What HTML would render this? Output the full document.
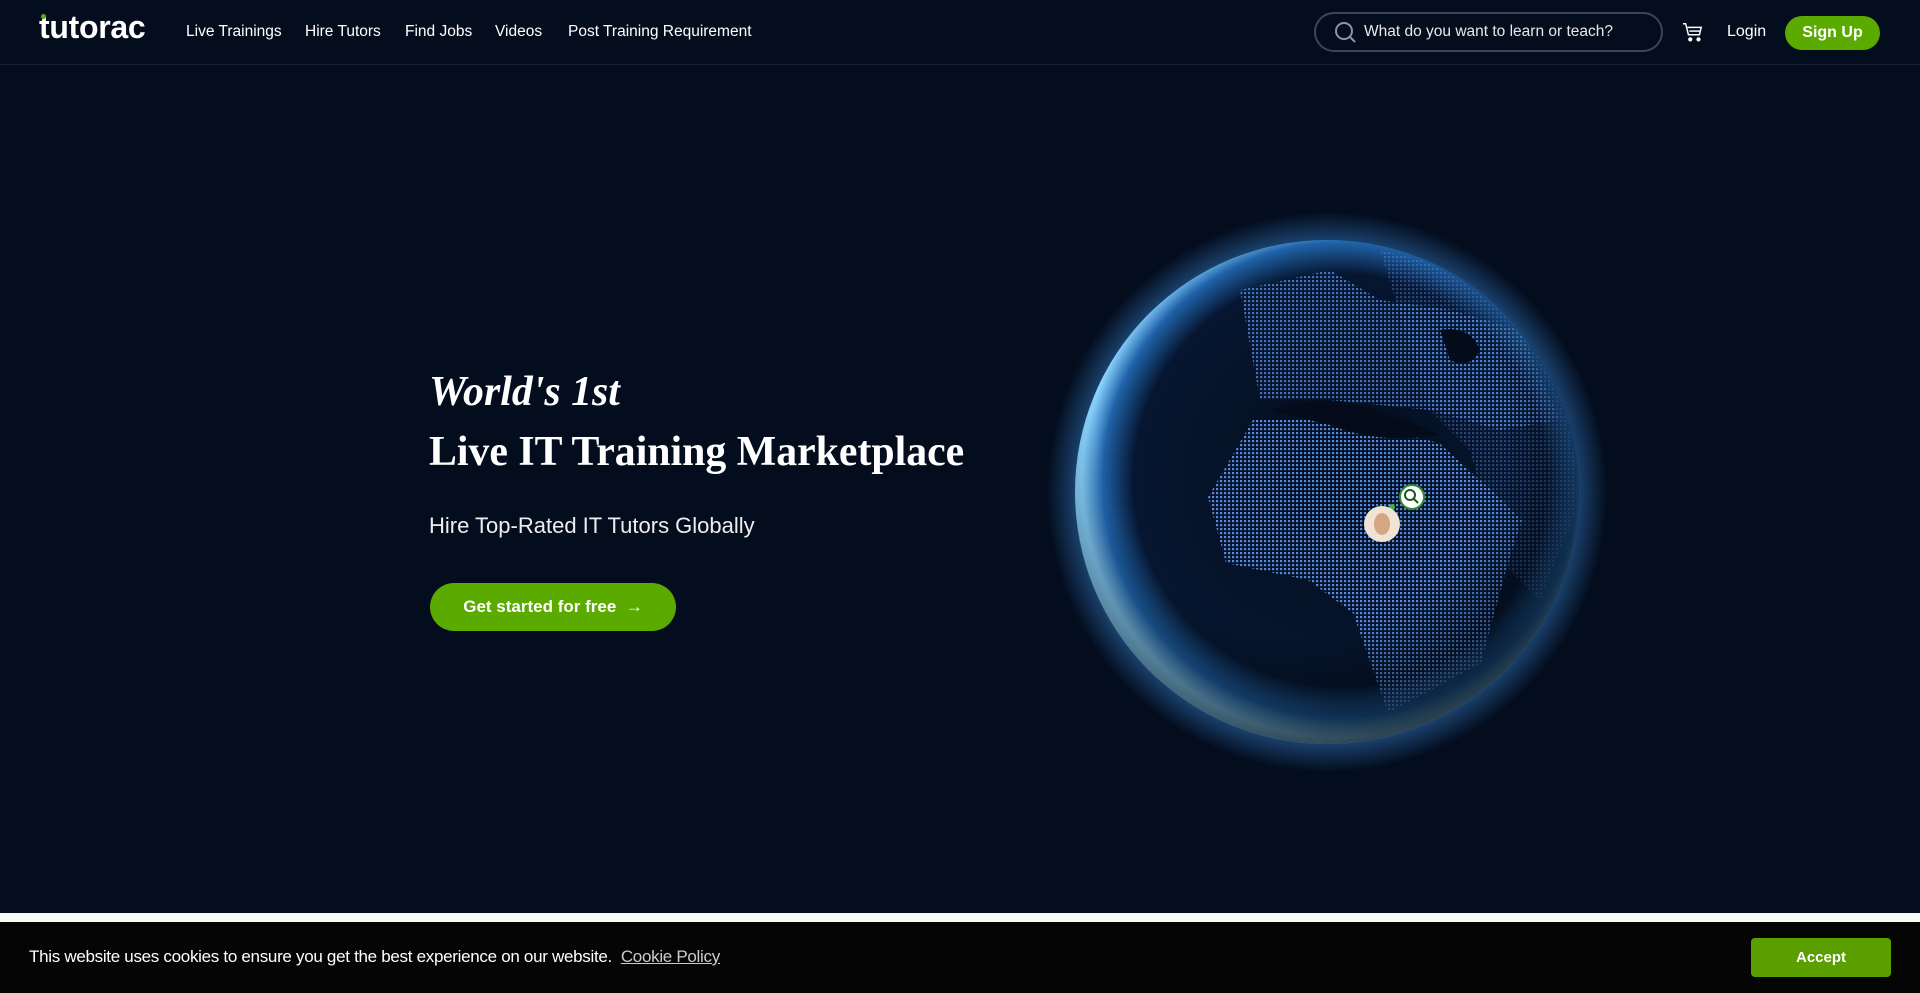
<!DOCTYPE html>
<html><head><meta charset="utf-8"><style>
*{margin:0;padding:0;box-sizing:border-box}
body{width:1920px;height:993px;background:#040d1e;overflow:hidden;font-family:"Liberation Sans",sans-serif;color:#fff;position:relative}
.hdr{position:absolute;left:0;top:0;width:1920px;height:65px;border-bottom:1px solid #1a2335}
.logo{position:absolute;left:39px;top:9px;font-size:32px;font-weight:bold;letter-spacing:-0.3px}
.logo i{position:absolute;left:2px;top:5px;width:5px;height:5px;border-radius:50%;background:#5aaa12}
.nav{position:absolute;top:23px;font-size:15.5px}
.search{position:absolute;left:1314px;top:12px;width:349px;height:40px;border:2px solid #3c4556;border-radius:20px}
.search span{position:absolute;left:48px;top:9px;font-size:15.5px;color:#e8e8e8}
.btn{background:#5aaa00;border-radius:20px;position:absolute;font-weight:bold;text-align:center}
h1{position:absolute;left:429px;font-family:"Liberation Serif",serif;font-weight:bold;font-size:41.8px;white-space:nowrap}
</style></head><body>
<div class="hdr">
<div class="logo"><i></i>tutorac</div>
<div class="nav" style="left:186px">Live Trainings</div>
<div class="nav" style="left:305px">Hire Tutors</div>
<div class="nav" style="left:405px">Find Jobs</div>
<div class="nav" style="left:495px">Videos</div>
<div class="nav" style="left:568px">Post Training Requirement</div>
<div class="search"><svg style="position:absolute;left:18px;top:7px" width="24" height="24" viewBox="0 0 24 24" fill="none" stroke="#8a93a3" stroke-width="2"><circle cx="10" cy="10" r="8"/><path d="M16 16l5 5"/></svg><span>What do you want to learn or teach?</span></div>
<svg style="position:absolute;left:1682px;top:21px" width="22" height="22" viewBox="0 0 24 24" fill="none" stroke="#fff" stroke-width="1.6"><path d="M1 3h3l3 12h12l2-8H6"/><path d="M8 11h12"/><circle cx="9" cy="20" r="1.5" fill="#fff"/><circle cx="18" cy="20" r="1.5" fill="#fff"/></svg>
<div class="nav" style="left:1727px;top:23px;font-size:16px">Login</div>
<div class="btn" style="left:1785px;top:16px;width:95px;height:34px;line-height:34px;font-size:16px">Sign Up</div>
</div>
<h1 style="top:368px;font-style:italic">World's 1st</h1>
<h1 style="top:428px">Live IT Training Marketplace</h1>
<div style="position:absolute;left:429px;top:513px;font-size:22px;font-weight:300;color:#eee">Hire Top-Rated IT Tutors Globally</div>
<div class="btn" style="left:430px;top:583px;width:246px;height:48px;line-height:48px;border-radius:24px;font-size:17px">Get started for free &nbsp;→</div>
<svg style="position:absolute;left:1033px;top:197px" width="590" height="600" viewBox="1033 197 590 600">
<defs>
<radialGradient id="g" cx="1340" cy="480" r="258" gradientUnits="userSpaceOnUse"><stop offset="0" stop-color="#040c1c"/><stop offset="0.8" stop-color="#061630"/><stop offset="0.92" stop-color="#1f62a8"/><stop offset="1" stop-color="#8ad4ff"/></radialGradient>
<radialGradient id="s" cx="1300" cy="430" r="330" gradientUnits="userSpaceOnUse"><stop offset="0.62" stop-color="#000" stop-opacity="0"/><stop offset="1" stop-color="#000" stop-opacity="0.75"/></radialGradient>
<radialGradient id="h" cx="1327" cy="492" r="280" gradientUnits="userSpaceOnUse"><stop offset="0.86" stop-color="#3a8ee0" stop-opacity="0.55"/><stop offset="1" stop-color="#3a8ee0" stop-opacity="0"/></radialGradient>
<pattern id="d" width="4" height="4" patternUnits="userSpaceOnUse"><rect width="2.2" height="2.2" fill="#5a8ee0"/></pattern>
<clipPath id="c"><circle cx="1327" cy="492" r="250"/></clipPath>
</defs>
<circle cx="1327" cy="492" r="280" fill="url(#h)"/>
<circle cx="1327" cy="492" r="252" fill="url(#g)"/>
<g clip-path="url(#c)">
<path d="M1380 250 L1500 280 L1570 360 L1580 500 L1540 600 L1500 560 L1470 450 L1430 410 Z" fill="url(#d)" opacity="0.4"/>
<path d="M1240 290 L1330 270 L1380 300 L1450 310 L1520 330 L1560 420 L1500 430 L1430 410 L1330 400 L1260 400 Z" fill="url(#d)" opacity="0.75"/>
<path d="M1208 497 L1253 420 L1336 417 L1439 443 L1491 490 L1522 520 L1508 563 L1481 663 L1388 713 L1353 613 L1308 580 L1226 563 Z" fill="url(#d)" opacity="0.95"/>
<path d="M1270 410 Q1330 390 1390 415 Q1420 425 1440 435 Q1380 445 1330 425 Q1300 418 1270 410 Z" fill="#040c1c"/>
<path d="M1440 330 Q1470 325 1480 350 Q1470 370 1450 360 Z" fill="#040c1c"/>
</g>
<circle cx="1327" cy="492" r="252" fill="url(#s)"/>
<circle cx="1412" cy="497" r="12" fill="#fff" stroke="#2f8a2f" stroke-width="2"/>
<circle cx="1410" cy="495" r="5" fill="none" stroke="#1a5a20" stroke-width="2"/>
<path d="M1414 499l4 4" stroke="#1a5a20" stroke-width="2"/>
<circle cx="1392" cy="507" r="3" fill="#3bb43b"/>
<circle cx="1382" cy="524" r="18" fill="#f1e3d3"/>
<ellipse cx="1382" cy="524" rx="8" ry="11" fill="#d6a682"/>
</svg>
<div style="position:absolute;left:0;top:913px;width:1920px;height:9px;background:#f7fbf8"></div>
<div style="position:absolute;left:0;top:922px;width:1920px;height:71px;background:#050505">
<div style="position:absolute;left:29px;top:25px;font-size:17px;letter-spacing:-0.3px">This website uses cookies to ensure you get the best experience on our website. &nbsp;<u style="color:#ccc">Cookie Policy</u></div>
<div style="position:absolute;left:1751px;top:16px;width:140px;height:39px;background:#5a9e00;border-radius:4px;text-align:center;line-height:39px;font-weight:bold;font-size:15px">Accept</div>
</div>
</body></html>
